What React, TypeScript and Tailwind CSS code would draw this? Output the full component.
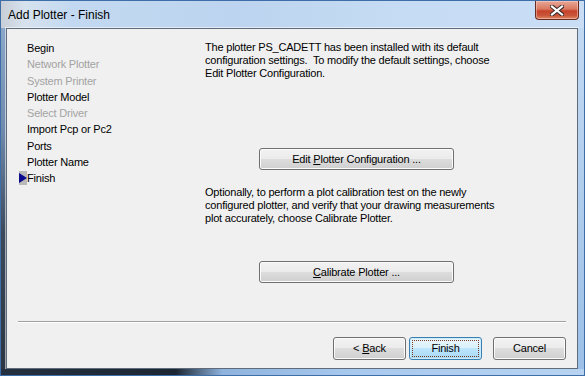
import React from "react";

const font = { fontFamily: '"Liberation Sans", Arial, sans-serif' };

function Btn({
  children,
  className = "",
  primary = false,
}: {
  children: React.ReactNode;
  className?: string;
  primary?: boolean;
}) {
  return (
    <div
      className={
        "relative flex items-center justify-center rounded-[3px] border text-[11px] tracking-[-0.2px] text-black " +
        (primary
          ? "border-[#3c7fb1] bg-[linear-gradient(to_bottom,#eaf6fd_0%,#d9f0fc_50%,#bee6fd_50%,#a7d9f5_100%)] shadow-[inset_0_0_0_1px_#c8ecfd] "
          : "border-[#707070] bg-[linear-gradient(to_bottom,#f2f2f2_0%,#ebebeb_50%,#dddddd_50%,#cfcfcf_100%)] shadow-[inset_0_0_0_1px_#fbfbfb] ") +
        className
      }
    >
      {primary && (
        <div className="absolute inset-[2px] border border-dotted border-[#7b3a26]" />
      )}
      <span className="relative">{children}</span>
    </div>
  );
}

export default function App() {
  const items: [string, boolean][] = [
    ["Begin", true],
    ["Network Plotter", false],
    ["System Printer", false],
    ["Plotter Model", true],
    ["Select Driver", false],
    ["Import Pcp or Pc2", true],
    ["Ports", true],
    ["Plotter Name", true],
    ["Finish", true],
  ];
  return (
    <div
      style={font}
      className="w-[585px] h-[376px] overflow-hidden flex flex-col border border-[#3d6ea8] bg-[#a9c9ec]"
    >
      {/* Title bar */}
      <div className="h-[27px] flex items-start bg-[linear-gradient(to_right,#c7ced6_0%,#d7e2ee_4%,#c3d9f1_12%,#bcd4ef_40%,#c6dcf4_70%,#c9def5_100%)]">
        <div className="pl-[7px] pt-[7px] text-[12px] leading-[15px] text-black">
          Add Plotter - Finish
        </div>
        <div className="ml-auto mr-[5px] w-[44px] h-[19px] rounded-b-[4px] border border-t-0 border-[#6a2c22] bg-[linear-gradient(to_bottom,#e9a899_0%,#d9785f_45%,#c7432a_55%,#c9553a_80%,#e08a63_100%)] shadow-[inset_0_0_0_1px_rgba(255,220,210,0.45)] flex items-center justify-center">
          <svg width="14" height="11" viewBox="0 0 14 11">
            <path d="M2 1.5 L12 9.5 M12 1.5 L2 9.5" stroke="#3b2a2a" strokeWidth="4.2" strokeLinecap="square" />
            <path d="M2 1.5 L12 9.5 M12 1.5 L2 9.5" stroke="#ffffff" strokeWidth="2.2" strokeLinecap="square" />
          </svg>
        </div>
      </div>

      {/* Middle row */}
      <div className="flex h-[341px]">
        <div className="w-[5px] bg-[linear-gradient(to_bottom,#8aa6c9_0%,#6f8aad_30%,#3c4a5c_60%,#2c3644_100%)]" />
        <div className="w-[572px] border border-[#5f6c7b] shadow-[0_0_0_1px_rgba(255,255,255,0.55)] bg-[#f0f0f0] flex flex-col">
          <div className="flex pt-[11px]">
            {/* Left steps list */}
            <div className="w-[198px] pl-[12px] flex flex-col">
              {items.map(([label, enabled], i) => (
                <div key={label} className="flex items-center h-[16.25px]">
                  <div className="w-[8px] h-[14px] flex items-center">
                    {i === items.length - 1 && (
                      <div className="w-[8px] h-[14px] bg-[#b9b9b9] flex items-center">
                        <svg width="8" height="10" viewBox="0 0 8 10">
                          <path d="M0 0 L8 5 L0 10 Z" fill="#0a0a8c" />
                        </svg>
                      </div>
                    )}
                  </div>
                  <span
                    className={
                      "text-[11px] leading-[16px] tracking-[-0.2px] " +
                      (enabled ? "text-black" : "text-[#a3a3a3]")
                    }
                  >
                    {label}
                  </span>
                </div>
              ))}
            </div>

            {/* Right content */}
            <div className="flex flex-col">
              <p className="text-[11px] leading-[13px] tracking-[-0.2px] text-black pt-[1px]">
                The plotter PS_CADETT has been installed with its default
                <br />
                configuration settings.&nbsp; To modify the default settings, choose
                <br />
                Edit Plotter Configuration.
              </p>
              <Btn className="ml-[54px] mt-[68px] w-[195px] h-[22px]">
                Edit <u>P</u>lotter Configuration ...
              </Btn>
              <p className="mt-[16px] text-[11px] leading-[13px] tracking-[-0.2px] text-black">
                Optionally, to perform a plot calibration test on the newly
                <br />
                configured plotter, and verify that your drawing measurements
                <br />
                plot accurately, choose Calibrate Plotter.
              </p>
              <Btn className="ml-[54px] mt-[36px] w-[195px] h-[22px]">
                <u>C</u>alibrate Plotter ...
              </Btn>
            </div>
          </div>

          <div className="mt-[38px] mx-[11px] h-[2px] border-t border-[#a0a0a0] border-b border-b-white" />

          <div className="flex justify-end mt-[14px] mr-[11px]">
            <Btn className="w-[73px] h-[23px]">
              &lt; <u>B</u>ack
            </Btn>
            <Btn primary className="ml-[3px] w-[73px] h-[23px]">
              Finish
            </Btn>
            <Btn className="ml-[11px] w-[73px] h-[23px]">Cancel</Btn>
          </div>
        </div>
        <div className="flex-1 bg-[linear-gradient(to_bottom,#c2d9f2_0%,#9cc0e8_100%)]" />
      </div>

      {/* Bottom frame */}
      <div className="flex-1 bg-[linear-gradient(to_right,#243040_0%,#1c2633_30%,#8fb3dd_38%,#a8c9ee_60%,#b7d3f1_100%)]" />
    </div>
  );
}
